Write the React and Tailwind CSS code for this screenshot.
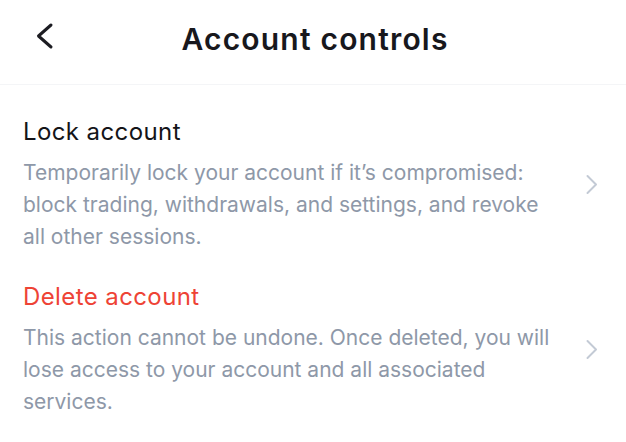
import React from "react";

function Chevron({ className }) {
  return (
    <svg className={className} width="12" height="21" viewBox="0 0 12 21" fill="none">
      <path d="M1.5 2 L10 10.5 L1.5 19" stroke="currentColor" strokeWidth="2" strokeLinecap="round" strokeLinejoin="round" />
    </svg>
  );
}

function Row({ title, titleClass, text }) {
  return (
    <div className="flex items-center pl-[23px] pr-[28px]">
      <div className="flex-1">
        <div className={"text-[24px] leading-[32px] tracking-[0.4px] " + titleClass}>{title}</div>
        <p className="mt-[9px] w-[530px] text-[21px] leading-[32px] text-[#8e98a8]">{text}</p>
      </div>
      <Chevron className="text-[#c3cad5]" />
    </div>
  );
}

export default function App() {
  return (
    <div className="w-[626px] h-[442px] bg-white font-['Inter',sans-serif]">
      <header className="relative h-[85px] flex items-center justify-center border-b border-[#f4f5f7]">
        <button className="absolute left-[34px] top-[22px] text-[#1c1c22]">
          <svg width="20" height="28" viewBox="0 0 20 28" fill="none">
            <path d="M17 3 L4.5 14 L17 25" stroke="currentColor" strokeWidth="3" strokeLinecap="round" strokeLinejoin="round" />
          </svg>
        </button>
        <h1 className="ml-[4px] text-[30px] font-semibold text-[#18181d] tracking-[1.2px] -mt-[5px]">Account controls</h1>
      </header>
      <div className="pt-[31px] flex flex-col gap-[28px]">
        <Row
          title="Lock account"
          titleClass="text-[#141418]"
          text="Temporarily lock your account if it’s compromised: block trading, withdrawals, and settings, and revoke all other sessions."
        />
        <Row
          title="Delete account"
          titleClass="text-[#ee4335]"
          text="This action cannot be undone. Once deleted, you will lose access to your account and all associated services."
        />
      </div>
    </div>
  );
}
